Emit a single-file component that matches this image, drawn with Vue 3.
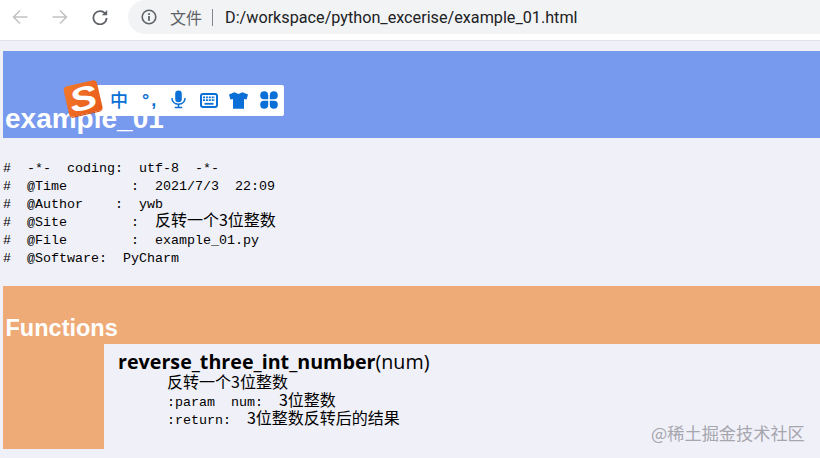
<template>
  <div class="page">
    <div class="toolbar">
      <div class="nav-icons">
        <svg class="nav-icon" viewBox="0 0 16 16" fill="none" stroke="#c2c2c2" stroke-width="1.5"><path d="M15.5 8H1.5M8 1.5L1.5 8L8 14.5" /></svg>
        <svg class="nav-icon" viewBox="0 0 16 16" fill="none" stroke="#c2c2c2" stroke-width="1.5"><path d="M.5 8H14.5M8 1.5L14.5 8L8 14.5" /></svg>
        <svg class="nav-icon" viewBox="0 0 16 16" fill="none" stroke="#5f6368" stroke-width="1.8"><path d="M13.6 5.2A6.6 6.6 0 1 0 14.6 9" /><path d="M15.2 1V6.3H9.9Z" fill="#5f6368" stroke="none" /></svg>
      </div>
      <div class="address">
        <svg class="info" viewBox="0 0 16 16" fill="none"><circle cx="8" cy="8" r="6.8" stroke="#5f6368" stroke-width="1.6" /><rect x="7.1" y="7" width="1.8" height="4.8" fill="#5f6368" /><rect x="7.1" y="4.2" width="1.8" height="1.8" fill="#5f6368" /></svg>
        <span class="scheme">文件</span>
        <span class="sep"></span>
        <span class="url">D:/workspace/python_excerise/example_01.html</span>
      </div>
    </div>

    <div class="content">
      <header class="title-bar">example_01</header>

      <div class="module-doc">
        <div v-for="(line, i) in moduleLines" :key="i" class="code-line">{{ line.text }}<span v-if="line.cjk" class="cjk">{{ line.cjk }}</span></div>
      </div>

      <section class="functions">
        <h2 class="section-title">Functions</h2>
        <div class="section-body">
          <div class="section-gutter"></div>
          <div class="func">
            <div class="signature"><strong>reverse_three_int_number</strong>(num)</div>
            <div class="doc">
              <div v-for="(line, i) in docLines" :key="i" class="code-line">{{ line.text }}<span class="cjk">{{ line.cjk }}</span></div>
            </div>
          </div>
        </div>
      </section>
    </div>

    <div class="ime">
      <div class="ime-logo"><span>S</span></div>
      <span class="ime-zh">中</span>
      <span class="ime-punct">°,</span>
      <svg class="ime-icon mic" viewBox="0 0 16 20" fill="none"><rect x="4.5" y="0.5" width="7" height="12.5" rx="3.5" fill="#0a6fd6" /><path d="M1 8.5C1 12.5 4 15 8 15S15 12.5 15 8.5" stroke="#0a6fd6" stroke-width="1.6" /><path d="M8 15V18M4 18.6H12" stroke="#0a6fd6" stroke-width="1.6" /></svg>
      <svg class="ime-icon keyboard" viewBox="0 0 18 15" fill="none"><rect x="1" y="1" width="16" height="13" rx="2" stroke="#0a6fd6" stroke-width="2" /><path d="M3 4.4H15M3 7.2H15" stroke="#0a6fd6" stroke-width="1.7" stroke-dasharray="2 .9" /><path d="M4.5 10.8H13.5" stroke="#0a6fd6" stroke-width="1.8" /></svg>
      <svg class="ime-icon shirt" viewBox="0 0 19 17"><path d="M5.5 .3L9.5 2L13.5 .3L19 2.6L17.6 7.6L15 7V16.8H4V7L1.4 7.6L0 2.6Z" fill="#0a6fd6" /></svg>
      <svg class="ime-icon clover" viewBox="0 0 18 18"><path d="M8.2 8.2H4A4 4 0 1 1 8.2 4ZM9.8 8.2V4A4 4 0 1 1 14 8.2ZM8.2 9.8V14A4 4 0 1 1 4 9.8ZM9.8 9.8H14A4 4 0 1 1 9.8 14Z" fill="#0a6fd6" /></svg>
    </div>

    <div class="watermark">@稀土掘金技术社区</div>
  </div>
</template>

<script setup>
const moduleLines = [
  { text: '#  -*-  coding:  utf-8  -*-' },
  { text: '#  @Time        :  2021/7/3  22:09' },
  { text: '#  @Author    :  ywb' },
  { text: '#  @Site        :  ', cjk: '反转一个3位整数' },
  { text: '#  @File        :  example_01.py' },
  { text: '#  @Software:  PyCharm' }
]

const docLines = [
  { text: '', cjk: '反转一个3位整数' },
  { text: ':param  num:  ', cjk: '3位整数' },
  { text: ':return:  ', cjk: '3位整数反转后的结果' }
]
</script>

<style>
html,
body {
  margin: 0;
  background: #f0f0f8;
  overflow: hidden;
}
</style>

<style scoped>
.page {
  position: relative;
  width: 820px;
  height: 458px;
  overflow: hidden;
  background: #f0f0f8;
}

.toolbar {
  display: flex;
  align-items: flex-start;
  height: 40px;
  background: #fff;
  border-bottom: 1px solid #dfe1e5;
}

.nav-icons {
  display: flex;
  gap: 24px;
  padding: 9px 0 0 12px;
  width: 116px;
}

.nav-icon {
  width: 16px;
  height: 16px;
}

.address {
  flex: 1;
  display: flex;
  align-items: center;
  height: 34px;
  padding-left: 13px;
  background: #f1f3f4;
  border-radius: 17px 0 0 17px;
}

.info {
  width: 16px;
  height: 16px;
}

.scheme {
  margin-left: 13px;
  font: 16px "Noto Sans CJK SC", sans-serif;
  color: #5f6368;
}

.sep {
  width: 1px;
  height: 17px;
  margin: 0 12px 0 10px;
  background: #80868b;
}

.url {
  font: 16.2px Roboto, sans-serif;
  color: #202124;
}

.content {
  padding: 10px 0 0 3px;
}

.title-bar {
  height: 87px;
  box-sizing: border-box;
  padding: 52px 0 0 2px;
  background: #7799ee;
  color: #fff;
  font: bold 28px/32px "Liberation Sans", Arial, sans-serif;
}

.module-doc {
  margin: 22px 0 18px;
}

.code-line {
  height: 18px;
  white-space: pre;
  color: #000;
  font: 13.33px/18px "Liberation Mono", monospace;
}

.cjk {
  font: 16px/0 "Noto Sans CJK SC", sans-serif;
}

.functions {
  background: #eeaa77;
}

.section-title {
  margin: 0;
  height: 58px;
  box-sizing: border-box;
  padding: 29px 0 0 2.5px;
  color: #fff;
  font: bold 23.5px/27px "Liberation Sans", Arial, sans-serif;
}

.section-body {
  display: grid;
  grid-template-columns: 101px 1fr;
  height: 105px;
}

.func {
  padding: 6px 0 0 14px;
  background: #f0f0f8;
  color: #000;
}

.signature {
  height: 26px;
  font: 19.7px/24px "Open Sans", sans-serif;
}

.signature strong {
  font-weight: 700;
}

.doc {
  padding-left: 49px;
}

.ime {
  position: absolute;
  left: 95px;
  top: 85px;
  width: 189px;
  height: 31px;
  background: #fff;
  border-radius: 2px;
  color: #0a6fd6;
}

.ime-logo {
  position: absolute;
  left: -29px;
  top: -2px;
  width: 34px;
  height: 31px;
  display: flex;
  align-items: center;
  justify-content: center;
  background: linear-gradient(135deg, #f47a2a, #e8591a);
  border-radius: 4px;
  transform: rotate(-13deg);
  box-shadow: 0 1px 0 #cf4f12;
  color: #fff;
  font: italic bold 33px/31px "Liberation Sans", sans-serif;
}

.ime-logo span {
  transform: scaleX(1.25);
}

.ime-zh {
  position: absolute;
  left: 15px;
  top: 1px;
  font: 500 18px/27px "Noto Sans CJK SC", sans-serif;
}

.ime-punct {
  position: absolute;
  left: 47px;
  top: 3px;
  font: bold 18px/24px "Liberation Sans", sans-serif;
  letter-spacing: 2px;
}

.ime-icon {
  position: absolute;
}

.mic {
  left: 76px;
  top: 5px;
  width: 15px;
  height: 19px;
}

.keyboard {
  left: 105px;
  top: 8px;
  width: 18px;
  height: 15px;
}

.shirt {
  left: 134px;
  top: 7px;
  width: 19px;
  height: 17px;
}

.clover {
  left: 165px;
  top: 6px;
  width: 18px;
  height: 18px;
}

.watermark {
  position: absolute;
  left: 651px;
  top: 423px;
  font: 17.2px/20px "Noto Sans CJK SC", sans-serif;
  color: #a6a6ae;
}
</style>
